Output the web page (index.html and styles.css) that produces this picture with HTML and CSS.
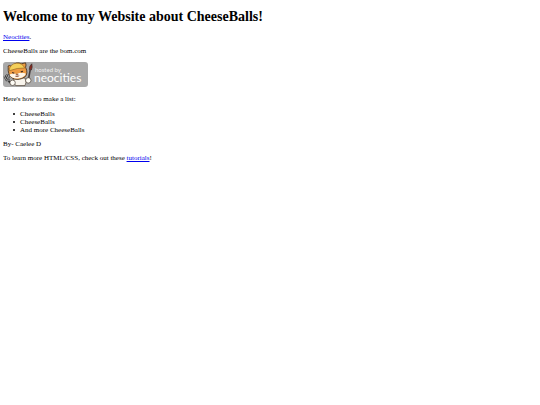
FILE: index.html
```
<!DOCTYPE html>
<html lang="en">
<head>
    <meta charset="UTF-8">
    <meta name="viewport" content="width=device-width, initial-scale=1.0">
    <title>CheeseBalls</title>
    <link rel="stylesheet" href="styles.css">
</head>
<body>
    <h1>Welcome to my Website about CheeseBalls!</h1>

    <p><a href="https://neocities.org">Neocities</a>.</p>

    <p>CheeseBalls are the bom.com</p>

    <svg class="badge" viewBox="0 0 85 25" role="img" aria-label="Hosted by Neocities">
        <rect width="85" height="25" rx="3" fill="#a9a9a9"/>
        <!-- fork -->
        <path d="M5.5 19 L10 22.5" stroke="#333" stroke-width="2.2"/>
        <path d="M1.4 14.2 L3.6 18.2 L7 18 M3 12.8 L5.2 17 M4.9 12.3 L6.4 16.8" fill="none" stroke="#333" stroke-width="2"/>
        <path d="M1.4 14.2 L3.6 18.2 L7 18 M3 12.8 L5.2 17 M4.9 12.3 L6.4 16.8" fill="none" stroke="#ddd" stroke-width=".7"/>
        <!-- brush -->
        <path d="M25.2 18.5 L27.2 8" stroke="#443d3d" stroke-width="1.6"/>
        <path d="M26.3 7.5 Q26 4 28.8 1.8 Q29.7 5 28.4 8 Z" fill="#8c2b20" stroke="#3b2a28" stroke-width=".7"/>
        <!-- cat -->
        <path d="M11 16 Q10 22 13 23.6 L22 23.6 Q24 21 22 16 Z" fill="#f8f4ec" stroke="#4a3c2e" stroke-width=".7"/>
        <path d="M5.2 5.5 Q4.5 3.5 6.2 3.5 L9 4.4 Q13 -.8 18.5 1.8 L22.5 .8 Q23.5 3 22.6 5.3 Q25.6 11.5 21.8 15 Q14.5 19.5 8.8 15.8 Q4.7 12.5 5.2 5.5 Z" fill="#ee9b42" stroke="#4a3524" stroke-width=".9"/>
        <path d="M6.5 12.6 Q10.5 10.5 13.8 12 Q18.2 9.6 22.7 11.6 Q22.5 14.2 19.2 15.4 Q13.8 17.7 9 15.4 Q6.6 14 6.5 12.6 Z" fill="#fff5e7"/>
        <path d="M6 8.8 Q7.2 1.7 13.2 1.2 Q19.3 .6 21.7 6 Q14.5 5.6 6 8.8 Z" fill="#f3cf5a" stroke="#9b6c24" stroke-width=".7"/>
        <path d="M9.1 10.5 L11.3 11.2 M17.8 9.9 L19.9 9.3" stroke="#40291e" stroke-width="1.2"/>
        <path d="M12.9 12.2 H15.2 L14.1 13.4 Z M12.2 14.1 Q14.2 15.4 16.3 13.7" fill="#b95c42" stroke="#634032" stroke-width=".5"/>
        <circle cx="9.6" cy="20.8" r="2.7" fill="#fffdf6" stroke="#4c4036" stroke-width=".7"/>
        <circle cx="25.3" cy="18.4" r="2.7" fill="#fffdf6" stroke="#4c4036" stroke-width=".7"/>
        <text class="badge-small" x="32" y="10">hosted by</text>
        <text class="badge-name" x="31" y="20">neocities</text>
    </svg>

    <p>Here's how to make a list:</p>

    <ul>
        <li>CheeseBalls</li>
        <li>CheeseBalls</li>
        <li>And more CheeseBalls</li>
    </ul>

    <p>By- Caelee D</p>

    <p>To learn more HTML/CSS, check out these <a href="https://neocities.org/tutorials">tutorials</a>!</p>
</body>
</html>
```

FILE: styles.css
```
body {
    margin: 9px 3px;
    background-color: white;
    color: black;
    font-family: "Liberation Serif", "Times New Roman", serif;
    font-size: 7px;
    line-height: 8px;
}
h1 {
    margin: 0 0 9px;
    font-size: 14px;
    line-height: 15px;
}
p {
    margin: 6px 0;
}
a {
    color: #0000ee;
}
.badge {
    display: block;
    width: 85px;
    height: 25px;
    margin: 7px 0 8px;
}
.badge-small {
    fill: #f0f0f0;
    font-family: Lato, sans-serif;
    font-size: 6px;
}
.badge-name {
    fill: white;
    font-family: Lato, sans-serif;
    font-size: 12px;
}
ul {
    margin: 7px 0 6px;
    padding-left: 17px;
    list-style: none;
}
li::before {
    content: "";
    display: inline-block;
    width: 2px;
    height: 2px;
    margin: 0 5px 1px -7px;
    border-radius: 50%;
    background-color: black;
}
```
